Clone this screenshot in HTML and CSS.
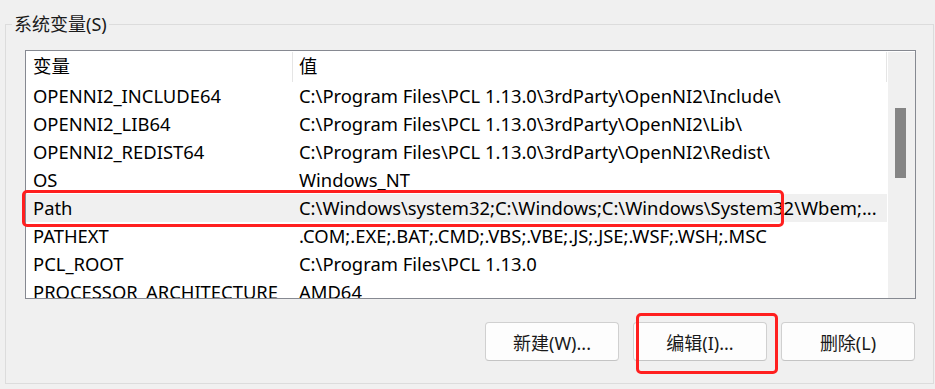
FILE: index.html
```html
<!DOCTYPE html>
<html lang="zh-CN">
<head>
    <meta charset="UTF-8">
    <meta name="viewport" content="width=device-width, initial-scale=1.0">
    <title>系统变量</title>
    <link rel="stylesheet" href="styles.css">
</head>
<body>
    <div class="dialog">
        <fieldset class="group">
            <legend>系统变量(S)</legend>

            <div class="listbox">
                <div class="list">
                    <div class="row head">
                        <div class="cell name">变量</div>
                        <div class="cell value">值</div>
                    </div>
                    <div class="row">
                        <div class="cell name">OPENNI2_INCLUDE64</div>
                        <div class="cell value">C:\Program Files\PCL 1.13.0\3rdParty\OpenNI2\Include\</div>
                    </div>
                    <div class="row">
                        <div class="cell name">OPENNI2_LIB64</div>
                        <div class="cell value">C:\Program Files\PCL 1.13.0\3rdParty\OpenNI2\Lib\</div>
                    </div>
                    <div class="row">
                        <div class="cell name">OPENNI2_REDIST64</div>
                        <div class="cell value">C:\Program Files\PCL 1.13.0\3rdParty\OpenNI2\Redist\</div>
                    </div>
                    <div class="row">
                        <div class="cell name">OS</div>
                        <div class="cell value">Windows_NT</div>
                    </div>
                    <div class="row selected">
                        <div class="cell name">Path</div>
                        <div class="cell value">C:\Windows\system32;C:\Windows;C:\Windows\System32\Wbem;...</div>
                    </div>
                    <div class="row">
                        <div class="cell name">PATHEXT</div>
                        <div class="cell value">.COM;.EXE;.BAT;.CMD;.VBS;.VBE;.JS;.JSE;.WSF;.WSH;.MSC</div>
                    </div>
                    <div class="row">
                        <div class="cell name">PCL_ROOT</div>
                        <div class="cell value">C:\Program Files\PCL 1.13.0</div>
                    </div>
                    <div class="row">
                        <div class="cell name">PROCESSOR_ARCHITECTURE</div>
                        <div class="cell value">AMD64</div>
                    </div>
                </div>
                <div class="scrollbar">
                    <div class="thumb"></div>
                </div>
            </div>

            <div class="buttons">
                <button class="btn">新建(W)...</button>
                <button class="btn">编辑(I)...</button>
                <button class="btn">删除(L)</button>
            </div>
        </fieldset>

        <!-- 红框标注 -->
        <div class="mark mark-path"></div>
        <div class="mark mark-edit"></div>
    </div>
</body>
</html>
```

FILE: styles.css
```css
body {
    margin: 0;
    background: #f0f0f0;
    font-family: "Noto Sans", "Noto Sans CJK SC", sans-serif;
    font-size: 18.4px;
    color: #000;
}

.dialog {
    position: relative;
    width: 935px;
    height: 389px;
    overflow: hidden;
}

.group {
    box-sizing: border-box;
    width: 929px;
    margin: 11px 0 0 5px;
    padding: 13px 17px 22px 19px;
    border: 1px solid #dcdcdc;
}

.group legend {
    margin-left: -13px;
    padding: 0 2px;
    line-height: 26px;
    font-size: 18px;
    color: #1a1a1a;
}

.listbox {
    display: flex;
    width: 891px;
    height: 249px;
    box-sizing: border-box;
    border: 1px solid #868991;
    background: white;
    overflow: hidden;
}

.list {
    width: 862px;
}

.row {
    display: flex;
    height: 28px;
    line-height: 28px;
    white-space: nowrap;
}

.row.head {
    height: 31px;
    line-height: 30px;
}

.row.head .cell {
    border-right: 1px solid #e5e5e5;
    height: 30px;
    margin-top: 1px;
    line-height: 28px;
}

.row.selected {
    background: #f0f0f0;
}

.cell {
    box-sizing: border-box;
    overflow: hidden;
}

.cell.name {
    width: 267px;
    padding-left: 7px;
}

.cell.value {
    flex: 1;
    padding-left: 6px;
}

.scrollbar {
    width: 27px;
    margin-top: 1px;
    background: #f0f0f0;
    border-left: 1px solid #fff;
}

.thumb {
    width: 11px;
    height: 70px;
    margin: 56px 0 0 7px;
    background: #858585;
}

.buttons {
    display: flex;
    justify-content: flex-end;
    gap: 14px;
    width: 890px;
    margin-top: 23px;
}

.btn {
    width: 134px;
    height: 39px;
    padding: 0;
    border: 1px solid #d0d0d0;
    border-bottom-color: #c4c4c4;
    border-radius: 4px;
    background: #fdfdfd;
    font-family: inherit;
    font-size: 18px;
    color: #1a1a1a;
}

.mark {
    position: absolute;
    box-sizing: border-box;
    border: 3px solid #ff1f1f;
    border-radius: 5px;
}

.mark-path {
    left: 22px;
    top: 190px;
    width: 762px;
    height: 37px;
}

.mark-edit {
    left: 636px;
    top: 313px;
    width: 142px;
    height: 61px;
}
```
